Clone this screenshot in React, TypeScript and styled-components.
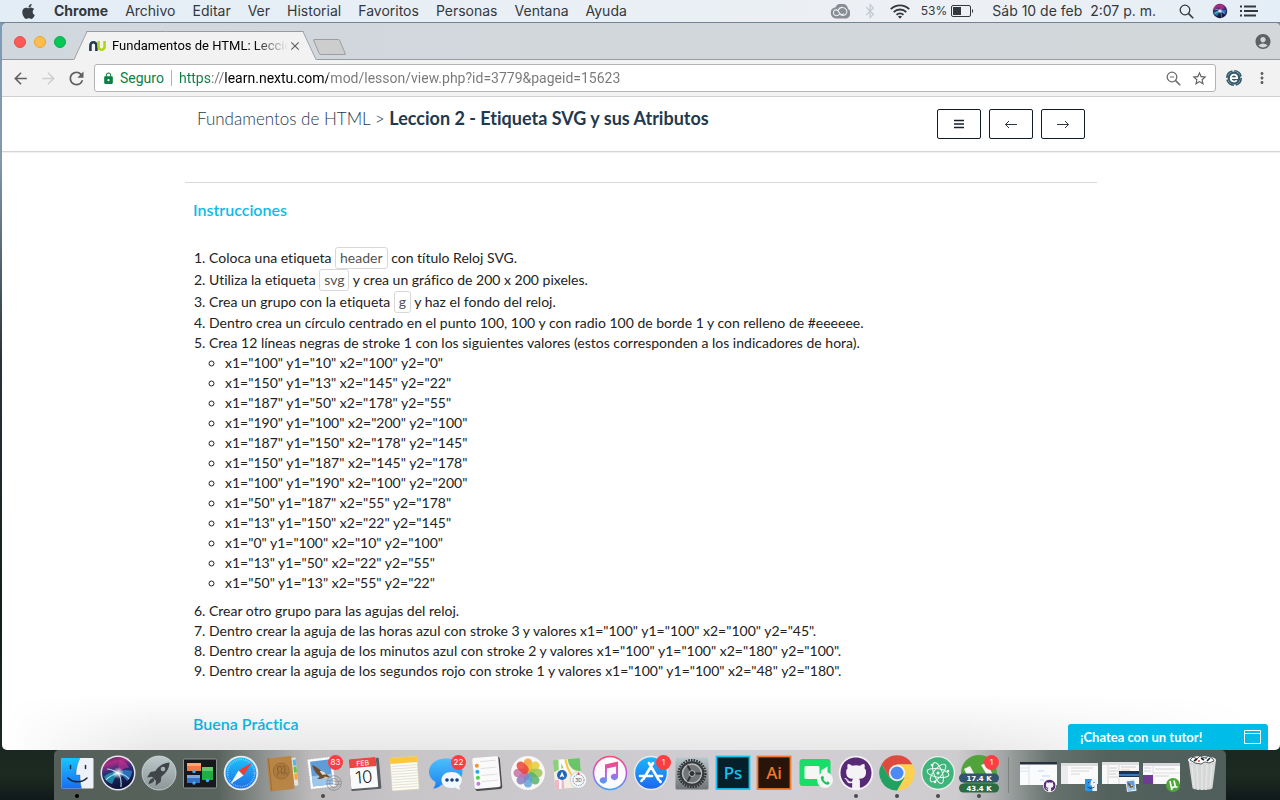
import React from "react";
import styled, { createGlobalStyle } from "styled-components";
import { FaApple, FaBluetoothB, FaGithub } from "react-icons/fa";
import {
  MdAccountCircle,
  MdArrowBack,
  MdArrowForward,
  MdClose,
  MdLock,
  MdMoreVert,
  MdRefresh,
  MdStarBorder,
} from "react-icons/md";

const GlobalStyle = createGlobalStyle`
  * { box-sizing: border-box; }
  body { margin: 0; }
  button, input { font: inherit; color: inherit; }
`;

const systemFont = `Inter, "Liberation Sans", sans-serif`;
const pageFont = `Lato, "Open Sans", sans-serif`;

const Desktop = styled.div`
  display: flex;
  flex-direction: column;
  height: 100vh;
  overflow: hidden;
  font-family: ${systemFont};
  background:
    linear-gradient(180deg, #7d9cb8 0, #8399ad 20%, #26333a 45%, #131d1c 75%, #1b2821 94%, #1d2a21 97%, #10191a 100%);
`;

/* ---------- system menu bar ---------- */

const MenuBar = styled.header`
  display: flex;
  justify-content: space-between;
  height: 23px;
  flex: none;
  padding: 0 22px 0 20px;
  background: linear-gradient(90deg, #e3edf6, #e9eff5 40%, #edf0f4 75%, #e4eef7);
  border-bottom: 1px solid #6f8499;
  color: #33383d;
  font-size: 14px;
  line-height: 22px;
`;

const MenuGroup = styled.nav`
  display: flex;
  align-items: center;
`;

const AppleButton = styled.button`
  display: flex;
  width: 34px;
  padding: 0;
  border: 0;
  background: none;
  color: #3b4046;
`;

const MenuItem = styled.button<{ $strong?: boolean }>`
  padding: 0;
  margin-right: 17px;
  border: 0;
  background: none;
  font-weight: ${(p) => (p.$strong ? 700 : 400)};
  line-height: 22px;
  white-space: nowrap;
`;

const StatusGroup = styled.div`
  display: flex;
  align-items: center;
  white-space: pre;
`;

const StatusItem = styled.span<{ $gap: number; $small?: boolean }>`
  display: flex;
  align-items: center;
  margin-left: ${(p) => p.$gap}px;
  font-size: ${(p) => (p.$small ? 12 : 14)}px;
`;

/* ---------- browser window ---------- */

const BrowserWindow = styled.section`
  position: relative;
  display: flex;
  flex-direction: column;
  flex: 1;
  min-height: 0;
  margin-left: 2px;
  border-radius: 5px;
  overflow: hidden;
  background: #fff;
`;

const TabStrip = styled.div`
  display: flex;
  align-items: flex-end;
  flex: none;
  height: 37px;
  padding: 0 8px 0 12px;
  background: linear-gradient(90deg, #d0d8de, #d2d7db 50%, #d3d7da);
  box-shadow: inset 0 -1px #999c9f;
`;

const Lights = styled.div`
  display: flex;
  align-self: center;
  gap: 8px;
  width: 66px;
`;

const Light = styled.button<{ $color: string; $edge: string }>`
  width: 12px;
  height: 12px;
  padding: 0;
  border: 1px solid ${(p) => p.$edge};
  border-radius: 50%;
  background: ${(p) => p.$color};
`;

const Tab = styled.div`
  position: relative;
  z-index: 0;
  display: flex;
  align-items: center;
  width: 230px;
  height: 29px;
  padding: 0 8px 0 9px;
  color: #000;
  font-family: Roboto, ${systemFont};
  font-size: 13px;

  &::before,
  &::after {
    content: "";
    position: absolute;
    z-index: -1;
    top: 0;
    bottom: 0;
    background: #f2f2f2;
    border: 0 solid #999c9f;
    border-top-width: 1px;
  }
  &::before {
    left: 0;
    right: 40%;
    border-left-width: 1px;
    transform: skewX(-25deg);
  }
  &::after {
    left: 40%;
    right: 0;
    border-right-width: 1px;
    transform: skewX(25deg);
  }
`;

const TabTitle = styled.span`
  flex: 1;
  min-width: 0;
  margin: 0 0 0 6px;
  white-space: nowrap;
  mask-image: linear-gradient(90deg, #000 80%, transparent 100%);
`;

const IconButton = styled.button<{ $color?: string; $width?: number }>`
  display: flex;
  align-items: center;
  justify-content: center;
  flex: none;
  width: ${(p) => p.$width ?? 28}px;
  padding: 0;
  border: 0;
  background: none;
  color: ${(p) => p.$color ?? "#5f6163"};
`;

const NewTab = styled.button`
  width: 27px;
  height: 16px;
  margin: 0 auto 5px 6px;
  padding: 0;
  border: 1px solid #9b9ea0;
  border-radius: 2px;
  background: #cdcdcd;
  transform: skewX(23deg);
`;

const ProfileSlot = styled.div`
  align-self: center;
`;

const Toolbar = styled.form`
  display: flex;
  align-items: center;
  flex: none;
  height: 37px;
  padding: 0 4px;
  background: #f2f2f2;
  border-bottom: 1px solid #cfcfcf;
`;

const AddressBar = styled.div`
  display: flex;
  align-items: center;
  flex: 1;
  height: 28px;
  margin: 0 4px;
  padding: 0 4px 0 7px;
  border: 1px solid #b4b4b4;
  border-radius: 3px;
  background: #fff;
  font-family: Roboto, ${systemFont};
  font-size: 14px;
`;

const Secure = styled.span`
  display: flex;
  align-items: center;
  gap: 5px;
  padding-right: 7px;
  border-right: 1px solid #b0b0b0;
  color: #0b8043;
  line-height: 16px;
`;

const UrlInput = styled.input`
  flex: 1;
  min-width: 0;
  margin-left: 7px;
  padding: 0;
  border: 0;
  outline: 0;
  color: #777;
  -webkit-text-fill-color: transparent;
  background: linear-gradient(90deg, #0b8043 33px, #777 33px, #777 46px, #000 46px, #000 149px, #777 149px);
  -webkit-background-clip: text;
  background-clip: text;
`;

/* ---------- lesson page ---------- */

const Page = styled.main`
  flex: 1;
  min-height: 0;
  overflow: hidden;
  font-family: ${pageFont};
  font-variant-ligatures: no-common-ligatures;
  color: #222;
`;

const LessonHeader = styled.div`
  height: 55px;
  border-bottom: 1px solid #d4d4d4;
  box-shadow: 0 1px #f0f0f0;
`;

const Container = styled.div`
  width: 72%;
  max-width: 912px;
  margin: 0 auto;
`;

const HeaderRow = styled(Container)`
  display: flex;
  justify-content: space-between;
  padding: 9px 12px 0;
`;

const Title = styled.h1`
  margin: 0;
  color: #23394d;
  font-size: 17px;
  font-weight: 300;
  line-height: 24px;

  strong {
    font-size: 18px;
    font-weight: 700;
  }
`;

const PagerButtons = styled.div`
  display: flex;
  gap: 8px;
  padding-top: 3px;
`;

const PagerButton = styled.button`
  display: flex;
  align-items: center;
  justify-content: center;
  width: 44px;
  height: 30px;
  padding: 0;
  border: 1px solid #111c26;
  border-radius: 2px;
  background: #fff;
`;

const Lesson = styled(Container)`
  margin-top: 30px;
  padding: 0 8px;
  border-top: 1px solid #d8d8d8;
`;

const SectionTitle = styled.h2<{ $top: number }>`
  margin: ${(p) => p.$top}px 0 0;
  color: #0cbce8;
  font-size: 16px;
  font-weight: 600;
  line-height: 24px;
`;

const Steps = styled.ol`
  margin: 25px 0 0;
  padding: 0 0 0 16px;
  font-size: 14px;
  line-height: 20px;
`;

const Lines = styled.ul`
  margin: 0 0 8px;
  padding: 0 0 0 16px;
  list-style: circle;
`;

const Code = styled.code`
  display: inline-block;
  padding: 0 4px;
  border: 1px solid #d8d8d8;
  border-radius: 3px;
  color: #555;
  font-family: ${pageFont};
  line-height: 20px;
`;

const DockShade = styled.div`
  position: absolute;
  left: 0;
  right: 0;
  bottom: 0;
  height: 56px;
  pointer-events: none;
  background: linear-gradient(180deg, transparent, rgba(0, 0, 0, 0.09));
  mask-image: linear-gradient(90deg, transparent, #000 12%, #000 75%, transparent 98%);
`;

const ChatButton = styled.button`
  position: absolute;
  right: 12px;
  bottom: 0;
  display: flex;
  align-items: center;
  justify-content: space-between;
  width: 200px;
  height: 26px;
  padding: 0 7px 0 12px;
  border: 0;
  border-radius: 3px 3px 0 0;
  background: #00bce8;
  color: #fff;
  font-family: ${pageFont};
  font-size: 13px;
  font-weight: 700;
`;

/* ---------- dock ---------- */

const DockShelf = styled.footer`
  display: flex;
  justify-content: center;
  flex: none;
  height: 50px;
`;

const Dock = styled.div`
  display: flex;
  padding: 0 4px 0 2px;
  border-radius: 5px 5px 0 0;
  background: linear-gradient(90deg, #535f58 0, #59635d 14%, #8f9391 18%, #bdbabc 22%, #c8c5c9 30%, #d2cfd4 60%, #cfccd0 77%, #a3a6a6 81%, #66726e 85%, #54625e 90%, #4f5e5a 100%);
`;

const DockButton = styled.button`
  position: relative;
  display: flex;
  flex-direction: column;
  align-items: center;
  width: 41px;
  height: 50px;
  padding: 3px 0 0;
  border: 0;
  background: none;
`;

const DockDivider = styled.span`
  width: 1px;
  height: 36px;
  margin: 7px 8px 0 9px;
  background: #7d8482;
`;

const Running = styled.span<{ $dark?: boolean }>`
  width: 4px;
  height: 4px;
  margin-top: 1px;
  border-radius: 50%;
  background: ${(p) => (p.$dark ? "#000" : "#4a484b")};
`;

const Badge = styled.span`
  position: absolute;
  top: 5px;
  right: 0;
  min-width: 15px;
  height: 15px;
  border-radius: 8px;
  background: #fb3e43;
  color: #fff;
  font-family: ${systemFont};
  font-size: 8px;
  line-height: 15px;
  text-align: center;
`;

const Art = ({ children }: { children: React.ReactNode }) => (
  <svg width="40" height="40" viewBox="0 0 40 40" aria-hidden="true">
    {children}
  </svg>
);

const range = (n: number) => Array.from({ length: n }, (_, i) => i);

const Finder = () => (
  <Art>
    <defs>
      <linearGradient id="finder" x1="0" y1="0" x2="0" y2="1">
        <stop offset="0" stopColor="#18c5fd" />
        <stop offset="1" stopColor="#1c6cf4" />
      </linearGradient>
    </defs>
    <rect x="4.500" y="5" width="32" height="30.500" rx="1" fill="#eef2f8" />
    <path d="M4.500 6a1 1 0 0 1 1-1H23c-2.500 5-4 10-4 17h4c0 5 .4 9 1.500 13.500h-19a1 1 0 0 1-1-1z" fill="url(#finder)" />
    <path d="M13.500 12.500v3M28.500 12.500v3" stroke="#1b3040" strokeWidth="1.500" strokeLinecap="round" />
    <path d="M23 5c-2.500 5-4 10-4 17h4c0 5 .4 9 1.500 13.500" fill="none" stroke="#243c50" strokeWidth=".6" opacity=".5" />
    <path d="M11 25c5 5 14 5 19 0" fill="none" stroke="#12202b" strokeWidth="1.400" strokeLinecap="round" />
  </Art>
);

const SiriGlyph = () => (
  <>
    <defs>
      <linearGradient id="siri" x1="0" y1="0" x2=".3" y2="1">
        <stop offset="0" stopColor="#3a2650" />
        <stop offset=".25" stopColor="#b02a86" />
        <stop offset=".5" stopColor="#2c2f78" />
        <stop offset="1" stopColor="#0d1338" />
      </linearGradient>
      <radialGradient id="siriGlow">
        <stop offset="0" stopColor="#fff" />
        <stop offset="1" stopColor="#fff" stopOpacity="0" />
      </radialGradient>
    </defs>
    <circle cx="20" cy="20" r="17.500" fill="#e5e4ec" />
    <circle cx="20" cy="20" r="16" fill="url(#siri)" />
    <path d="M20 20C13 18 9 21 6 24c2 4 5 6 8 7 2-4 3-7 6-11z" fill="#1fc5d3" opacity=".6" />
    <path d="M20 20c5-4 9-3 14-2 0 4-2 8-5 10-3-4-5-6-9-8z" fill="#2f8fe0" opacity=".7" />
    <path d="M20 20c0-6 1-10 2-13 4 1 8 4 9 8-4 0-7 1-11 5z" fill="#d8308f" opacity=".55" />
    <path d="M20 20C15 17 11 16 9 16M20 20c-6 2-10 4-12 7M20 20c4 5 3 11 3 14M20 20c5 1 9 3 11 6" fill="none" stroke="#c7fbff" strokeWidth="1.200" opacity=".8" />
    <circle cx="20" cy="20" r="6" fill="url(#siriGlow)" />
  </>
);

const Launchpad = () => (
  <Art>
    <defs>
      <linearGradient id="launch" x1="0" y1="0" x2="0" y2="1">
        <stop offset="0" stopColor="#bcc8ca" />
        <stop offset="1" stopColor="#8b9698" />
      </linearGradient>
    </defs>
    <circle cx="20" cy="20" r="17" fill="url(#launch)" stroke="#dbe2e2" strokeWidth=".7" />
    <path d="M30.500 9.500c-7 .5-11 4-14 8.500l-5 1-3.500 5.500 5-.8 4 4-.3 5 5-4 .6-5c5-4 8-8 8.200-14.200z" fill="#40454a" />
    <path d="M14 25c-3 1-4 3-4.500 6 3-.5 5-1.500 6-4z" fill="#40454a" />
    <circle cx="24" cy="16" r="2.300" fill="#a7b1b4" />
  </Art>
);

const MissionControl = () => (
  <Art>
    <rect x="3.500" y="6" width="33" height="29" rx="1" fill="#17181b" stroke="#8b9490" strokeWidth="1" />
    <rect x="7" y="10" width="14" height="8" fill="#ef7c3e" />
    <rect x="7" y="10" width="14" height="3" fill="#f8a878" />
    <rect x="7" y="22" width="13" height="8" fill="#3272c9" />
    <rect x="7" y="22" width="13" height="3" fill="#80a7de" />
    <rect x="22" y="14" width="11" height="13" fill="#1fae45" />
    <rect x="22" y="14" width="11" height="4" fill="#64c871" />
    <g fill="#45aaf5">
      <circle cx="14" cy="18.500" r="1.700" />
      <circle cx="14" cy="30" r="1.700" />
      <circle cx="27.500" cy="27.500" r="1.700" />
    </g>
  </Art>
);

const Safari = () => (
  <Art>
    <defs>
      <linearGradient id="safari" x1="0" y1="0" x2="0" y2="1">
        <stop offset="0" stopColor="#1cc3fb" />
        <stop offset="1" stopColor="#1c6fe6" />
      </linearGradient>
    </defs>
    <circle cx="20" cy="20" r="17.300" fill="#e8eaec" />
    <circle cx="20" cy="20" r="15.500" fill="url(#safari)" />
    <circle cx="20" cy="20" r="13.500" fill="none" stroke="#b9e4fb" strokeWidth="1.600" strokeDasharray=".5 1.270" />
    <path d="M31 9.500 22.500 22.500 17.500 17.500z" fill="#f63a35" />
    <path d="M9.500 31 17.500 17.500 22.500 22.500z" fill="#f5f6f7" />
  </Art>
);

const Contacts = () => (
  <Art>
    <g transform="rotate(-6 20 20)">
      <rect x="29" y="6" width="6" height="28" fill="#e9e4da" />
      <rect x="32" y="8" width="3" height="6" fill="#4db6e8" />
      <rect x="32" y="15" width="3" height="6" fill="#62c14e" />
      <rect x="32" y="22" width="3" height="6" fill="#f7a531" />
      <rect x="6" y="4" width="25" height="33" rx="1.500" fill="#b98546" />
      <path d="M8 4v33" stroke="#9a6c36" strokeWidth="1" />
      <circle cx="19.500" cy="18" r="8" fill="#ab7a3f" stroke="#95682f" strokeWidth=".8" />
      <path d="M15 22c0-2 2-2 2-3-2-3-1-6 1-6s3 3 1 6c0 1 3 1 3 3M21 13c3 0 3 4 1.500 6 0 1 2.500 1 2.500 3" fill="none" stroke="#86602f" strokeWidth="1" />
    </g>
  </Art>
);

const StampGlyph = () => (
  <g transform="rotate(-7 18 20)">
    <rect x="6" y="5" width="25" height="30" fill="#fff" />
    <rect x="6" y="5" width="25" height="30" fill="none" stroke="#b8b6ba" strokeWidth="1" strokeDasharray="1 1.500" />
    <rect x="8.500" y="7.500" width="20" height="25" fill="#5f9cd8" />
    <rect x="8.500" y="22" width="20" height="10.500" fill="#9dc6ea" />
    <path d="M10 11c4 2 7 5 9 8 3 1 6 4 8 7-3-1-5-2-7-1-2 1-5 1-7 0 2 0 3-1 3-2-3-3-5-7-6-12z" fill="#6e4c2e" />
    <path d="M17 18c3 0 5 2 6 4l-4 0z" fill="#e6ddcf" />
    <path d="M21 24c2 0 3 1 3 2l-3 0z" fill="#e9c35a" />
  </g>
);

const Mail = () => (
  <Art>
    <StampGlyph />
    <g fill="none" stroke="#85878a" strokeWidth=".9" opacity=".8">
      <circle cx="31" cy="30" r="7.300" />
      <circle cx="31" cy="30" r="4.500" />
      <path d="M24 28c4-2 9 2 14 0M24 31c4-2 9 2 14 0" />
    </g>
  </Art>
);

const Calendar = () => (
  <Art>
    <g transform="rotate(-5 20 20)">
      <rect x="6" y="6" width="30" height="31" rx="1" fill="#596066" />
      <rect x="6" y="5" width="27" height="30" rx="1" fill="#fbfbfb" />
      <path d="M6 14V6a1 1 0 0 1 1-1h25a1 1 0 0 1 1 1v8z" fill="#ec4640" />
      <text x="19.500" y="12.500" textAnchor="middle" fontFamily="Inter, sans-serif" fontSize="7" fill="#fff">FEB</text>
      <text x="19.500" y="30" textAnchor="middle" fontFamily="Inter, sans-serif" fontSize="17" fontWeight="300" fill="#222">10</text>
    </g>
  </Art>
);

const Notes = () => (
  <Art>
    <g transform="rotate(-4 20 20)">
      <rect x="6" y="4" width="27" height="33" fill="#fdfcf4" stroke="#d8cfae" strokeWidth=".6" />
      <rect x="6" y="4" width="27" height="6" fill="#fcc83a" />
      <path d={range(9).map((i) => `M7 ${12.5 + i * 2.7}h25`).join("")} stroke="#dcdbd3" strokeWidth=".8" />
    </g>
  </Art>
);

const Messages = () => (
  <Art>
    <defs>
      <linearGradient id="msg" x1="0" y1="0" x2="0" y2="1">
        <stop offset="0" stopColor="#4cc0fb" />
        <stop offset="1" stopColor="#1a83f1" />
      </linearGradient>
    </defs>
    <path d="M20 5.500C10.500 5.500 3 11 3 18.500c0 4.500 2.500 8 6.500 10.500 0 3-1 5-2.500 6.500 4 0 7-2 8.500-4 12 2 21-4 21-13S29 5.500 20 5.500z" fill="url(#msg)" />
    <path d="M25.500 19c-6 0-10 3.500-10 8s4 8 10 8c1.500 0 3-.2 4-.6 1 1 3 2 5 2-1-1.400-1.300-2.500-1.200-3.700 1.600-1.500 2.500-3.500 2.500-5.700 0-4.500-4.300-8-10.300-8z" fill="#f1f8ff" />
    <g fill="#17407c">
      <circle cx="21" cy="27" r="1.800" />
      <circle cx="26" cy="27" r="1.800" />
      <circle cx="31" cy="27" r="1.800" />
    </g>
  </Art>
);

const Reminders = () => (
  <Art>
    <g transform="rotate(-5 20 20)">
      <rect x="7" y="5" width="27" height="32" rx="2" fill="#4d4c4e" />
      <rect x="6.500" y="4" width="26" height="31" rx="2" fill="#fafafa" />
      <path d="M14 8h16M14 15h16M14 22h16M14 28h16" stroke="#dadada" strokeWidth=".8" />
      <circle cx="10.500" cy="12" r="2" fill="#fb9126" />
      <circle cx="10.500" cy="18" r="2" fill="#26a7f4" />
      <circle cx="10.500" cy="24" r="2" fill="#4cd04b" />
      <circle cx="10.500" cy="30" r="2" fill="#c47be0" />
    </g>
  </Art>
);

const petals = ["#f9a02f", "#e8cd35", "#9fc750", "#57b36b", "#5da5d8", "#8b7fc0", "#c673a9", "#ec4438"];

const Photos = () => (
  <Art>
    <circle cx="20" cy="20" r="17" fill="#f8f7f6" />
    {petals.map((color, i) => (
      <rect key={color} x="15.800" y="5.500" width="8.400" height="14" rx="4.200" fill={color} opacity=".85" transform={`rotate(${i * 45} 20 20)`} />
    ))}
  </Art>
);

const Maps = () => (
  <Art>
    <g transform="rotate(-5 20 20)">
      <rect x="5" y="6" width="27" height="29" fill="#f3efe4" />
      <path d="M20 6h12v13c-7 0-12-5-12-13z" fill="#69c568" />
      <path d="M5 6h6l4 8-10 4z" fill="#8ed078" />
      <path d="M5 26h9v9H5z" fill="#f3b5c4" />
      <path d="M14 6c2 13 9 17 18 18M12 6l-2 29" fill="none" stroke="#fff" strokeWidth="2.500" />
      <path d="M18 6c0 10 4 20 14 23" fill="none" stroke="#f6c945" strokeWidth="2" />
    </g>
    <circle cx="13" cy="22" r="5" fill="#1f66bd" />
    <path d="m13 18.500 2.500 6-2.500-1.200-2.500 1.200z" fill="#fff" />
    <circle cx="29.500" cy="27" r="8.200" fill="#f6f6f7" stroke="#c3c3c6" strokeWidth=".6" />
    <circle cx="29.500" cy="27" r="5.500" fill="none" stroke="#6f8eb0" strokeWidth="1" strokeDasharray="1.500 1" />
    <text x="29.500" y="29" textAnchor="middle" fontFamily="Inter, sans-serif" fontSize="5" fill="#44566c">3D</text>
    <path d="m29.500 19 1.500 2.500h-3z" fill="#e3403a" />
  </Art>
);

const ITunes = () => (
  <Art>
    <defs>
      <linearGradient id="itunes" x1="0" y1="0" x2="0" y2="1">
        <stop offset="0" stopColor="#fb4a72" />
        <stop offset=".5" stopColor="#c15be6" />
        <stop offset="1" stopColor="#45a2f4" />
      </linearGradient>
    </defs>
    <circle cx="20" cy="20" r="16.500" fill="#fcfafc" stroke="url(#itunes)" strokeWidth="1.600" />
    <path d="M15 11.500 28 8.500v15.300a3.600 3.200 0 1 1-1.900-2.700v-7.600l-9.200 2v11.800a3.600 3.200 0 1 1-1.900-2.700z" fill="url(#itunes)" />
  </Art>
);

const AppStore = () => (
  <Art>
    <defs>
      <linearGradient id="store" x1="0" y1="0" x2="0" y2="1">
        <stop offset="0" stopColor="#1bb8fb" />
        <stop offset="1" stopColor="#1d66ee" />
      </linearGradient>
    </defs>
    <circle cx="20" cy="20" r="17.300" fill="#e9e9ef" />
    <circle cx="20" cy="20" r="15.800" fill="url(#store)" />
    <path d="m22 10-9.500 16M18 10l9.500 16.500M9 23h12M26 23h5M10.500 28l.5-1M29 28l.6 1" fill="none" stroke="#fff" strokeWidth="2.600" strokeLinecap="round" />
  </Art>
);

const Preferences = () => (
  <Art>
    <defs>
      <linearGradient id="prefs" x1="0" y1="0" x2="0" y2="1">
        <stop offset="0" stopColor="#b9c8ce" />
        <stop offset="1" stopColor="#6f7477" />
      </linearGradient>
    </defs>
    <rect x="3.500" y="4.500" width="33" height="32" rx="1.500" fill="url(#prefs)" />
    <circle cx="20" cy="20.500" r="13.500" fill="none" stroke="#2e3032" strokeWidth="2.200" strokeDasharray="1.600 1.100" />
    <circle cx="20" cy="20.500" r="12.500" fill="#37393b" />
    <circle cx="20" cy="20.500" r="9.500" fill="#737678" stroke="#b9bcbe" strokeWidth="1.500" />
    <path d="M20 20.500h9M20 20.500l-4.500-8M20 20.500l-4.500 8" stroke="#303234" strokeWidth="2" />
    <circle cx="20" cy="20.500" r="3" fill="#303234" stroke="#bbb" strokeWidth="1" />
  </Art>
);

const AdobeApp = ({ label, ink, paper }: { label: string; ink: string; paper: string }) => (
  <Art>
    <rect x="3.500" y="3.500" width="33" height="32.500" fill={paper} stroke={ink} strokeWidth="1.800" />
    <text x="20" y="26" textAnchor="middle" fontFamily='"Noto Sans", sans-serif' fontSize="17" fontWeight="500" fill={ink}>{label}</text>
  </Art>
);

const FaceTime = () => (
  <Art>
    <rect x="4.500" y="6" width="31" height="27" rx="3" fill="#19dd69" />
    <rect x="9.500" y="13" width="15" height="13" rx="1.500" fill="#f5f7f5" />
    <path d="m26 17.500 6.500-4v12l-6.500-4z" fill="#f5f7f5" />
    <circle cx="30" cy="27" r="8" fill="#f3f4f3" />
    <path d="M26 24c1-1.500 2-1.500 2.800 0 .5 1 .2 1.400-.5 2 .7 1.600 1.600 2.500 3.200 3.200.7-.8 1.200-1 2-.4 1.400 1 1.300 1.800 0 2.800C30 32.500 25 27.500 26 24z" fill="#1bc45b" />
  </Art>
);

const GitHubGlyph = () => (
  <>
    <circle cx="20" cy="20" r="17.300" fill="#f5f2f6" />
    <FaGithub x="4" y="4" size={32} color="#582a75" />
  </>
);

const ChromeArt = () => (
  <Art>
    <path d="M20 11.200h15.300A17.600 17.600 0 0 1 20 37.600l7.600-13.200z" fill="#fdd14f" />
    <path d="M4.700 11.200a17.600 17.600 0 0 0 15.300 26.400l7.600-13.200H12.400z" fill="#22a160" />
    <path d="M4.700 11.200 12.400 24.400 20 11.200h15.300a17.600 17.600 0 0 0-30.600 0z" fill="#dd4b3e" />
    <circle cx="20" cy="20" r="8.200" fill="#f3f3f3" />
    <circle cx="20" cy="20" r="6.500" fill="#4b8bf4" />
  </Art>
);

const Atom = () => (
  <Art>
    <circle cx="20" cy="20" r="17" fill="#e9efeb" />
    <circle cx="20" cy="20" r="15.700" fill="#3fb57c" />
    <g fill="none" stroke="#effaf4" strokeWidth="1">
      {[10, 70, 130].map((a) => (
        <ellipse key={a} cx="20" cy="20" rx="11" ry="4.200" transform={`rotate(${a} 20 20)`} />
      ))}
    </g>
    <g fill="#fff">
      <circle cx="20" cy="20" r="1.500" />
      <circle cx="14" cy="12" r="1.300" />
      <circle cx="30" cy="18" r="1.300" />
      <circle cx="17" cy="29" r="1.300" />
    </g>
  </Art>
);

const Torrent = () => (
  <Art>
    <circle cx="20" cy="20" r="18" fill="#51a43c" />
    <path d="m5 16 6-3 6 11H9zM22 12l6-2 6 12h-6z" fill="#f3f6f1" />
    <rect x="0" y="20.500" width="40" height="9" rx="4.500" fill="#33536f" />
    <rect x="0" y="30.500" width="40" height="9" rx="4.500" fill="#2b6b3f" />
    <g fill="#fff" fontFamily='"DejaVu Sans", sans-serif' fontSize="7" fontWeight="700" textAnchor="middle">
      <text x="20" y="27.500">17.4 K</text>
      <text x="20" y="37.500">43.4 K</text>
    </g>
  </Art>
);

const Shrunk = ({ children }: { children: React.ReactNode }) => (
  <g transform="translate(24 25) scale(.38)">{children}</g>
);

const WindowGitHub = () => (
  <Art>
    <rect x="2" y="9" width="37" height="23" fill="#fafbfd" />
    <rect x="2" y="9" width="37" height="2.500" fill="#26313f" />
    <path d="M11 12v20M2 15h9M2 18h9" stroke="#dde3ea" strokeWidth="1" />
    <path d="M20 18h6M24 23h8M22 27h4" stroke="#dce8fa" strokeWidth="2" />
    <Shrunk><GitHubGlyph /></Shrunk>
  </Art>
);

const WindowFinder = () => (
  <Art>
    <rect x="2" y="10" width="37" height="21" fill="#fbfbfb" />
    <rect x="2" y="10" width="37" height="3" fill="#dedede" />
    <path d="M2 13h7v18H2z" fill="#ececee" />
    <path d="M12 15h22M12 18h18M12 21h9" stroke="#cfd0d2" strokeWidth=".8" />
    <rect x="26" y="26" width="12" height="12" fill="#eef2f8" />
    <path d="M26 26h7c-1 2-1.600 4-1.600 6.500H33c0 2 .2 4 .6 5.500H26z" fill="#1d9bf6" />
    <path d="M28.500 34c2 1.600 5 1.600 7 0M29.500 29v1M35 29v1" fill="none" stroke="#12202b" strokeWidth=".8" />
  </Art>
);

const WindowMail = () => (
  <Art>
    <rect x="2" y="9" width="37" height="22" fill="#f9f9f9" />
    <rect x="2" y="9" width="37" height="3" fill="#dedfe0" />
    <path d="M8 12v19M19 12v19" stroke="#d2d2d4" strokeWidth=".8" />
    <path d="M9 15h8M9 18h9M9 21h7M9 24h9M21 14h15M21 17h9" stroke="#c6c7ca" strokeWidth=".8" />
    <rect x="19" y="18" width="20" height="6" fill="#1c3350" />
    <rect x="19" y="21" width="20" height="2" fill="#3d78b8" />
    <Shrunk><StampGlyph /></Shrunk>
  </Art>
);

const WindowTorrent = () => (
  <Art>
    <rect x="2" y="10" width="37" height="21" fill="#fafafa" />
    <rect x="2" y="10" width="37" height="3" fill="#d9d5df" />
    <path d="M12 13v18M12 20h27" stroke="#d5d5d8" strokeWidth=".8" />
    <path d="M3 15h7M3 18h7M14 16h20M14 23h14" stroke="#c8c8cc" strokeWidth=".8" />
    <rect x="2" y="22" width="10" height="9" fill="#6d3a94" />
    <circle cx="32" cy="32" r="7" fill="#4ea63a" />
    <path d="M29 28l1 5c.4 2 2.600 2 3.400.4M33 27.500l1.500 6.500h2M30 33l1 4" fill="none" stroke="#fff" strokeWidth="1.600" />
  </Art>
);

const Trash = () => (
  <Art>
    <path d="M6.500 7h27.500l-3.500 28c-.3 2.500-19.700 2.500-20 0z" fill="#d6d8d8" />
    <path d="M10 12l2 22M15 12l1 25M20 12v25M25 12l-1 25M30 12l-2 22" stroke="#e3e5e5" strokeWidth="1.600" />
    <ellipse cx="20" cy="7" rx="14" ry="4" fill="#eceeee" />
    <path d="m8 7 3-3 4 2 3-3 5 2 4-2 4 3 1 2-5 2-4-1-4 2-6-1z" fill="#fff" stroke="#43474a" strokeWidth=".9" />
    <path d="m12 8 3-2M19 5l3 2M25 8l3-3" stroke="#1d2225" strokeWidth="1.700" />
    <path d="M16 8h2" stroke="#d6453d" strokeWidth="1.500" />
    <path d="M23 5h2" stroke="#3c8fd0" strokeWidth="1.500" />
  </Art>
);

type DockItem = { name: string; art: React.ReactNode; badge?: string; running?: boolean; dark?: boolean };

const apps: DockItem[] = [
  { name: "Finder", art: <Finder />, running: true, dark: true },
  { name: "Siri", art: <Art><SiriGlyph /></Art> },
  { name: "Launchpad", art: <Launchpad /> },
  { name: "Mission Control", art: <MissionControl /> },
  { name: "Safari", art: <Safari /> },
  { name: "Contactos", art: <Contacts /> },
  { name: "Mail", art: <Mail />, badge: "83", running: true },
  { name: "Calendario", art: <Calendar /> },
  { name: "Notas", art: <Notes /> },
  { name: "Mensajes", art: <Messages />, badge: "22" },
  { name: "Recordatorios", art: <Reminders /> },
  { name: "Fotos", art: <Photos /> },
  { name: "Mapas", art: <Maps /> },
  { name: "iTunes", art: <ITunes /> },
  { name: "App Store", art: <AppStore />, badge: "1" },
  { name: "Preferencias", art: <Preferences /> },
  { name: "Photoshop", art: <AdobeApp label="Ps" ink="#13c5f4" paper="#04202b" /> },
  { name: "Illustrator", art: <AdobeApp label="Ai" ink="#f5792a" paper="#281408" /> },
  { name: "FaceTime", art: <FaceTime /> },
  { name: "GitHub", art: <Art><GitHubGlyph /></Art>, running: true },
  { name: "Chrome", art: <ChromeArt />, running: true },
  { name: "Atom", art: <Atom />, running: true },
  { name: "Torrent", art: <Torrent />, badge: "1", running: true },
];

const minimized: DockItem[] = [
  { name: "Ventana de GitHub", art: <WindowGitHub /> },
  { name: "Ventana de Finder", art: <WindowFinder /> },
  { name: "Ventana de Mail", art: <WindowMail /> },
  { name: "Ventana de Torrent", art: <WindowTorrent /> },
  { name: "Papelera", art: <Trash /> },
];

const DockEntry = ({ item }: { item: DockItem }) => (
  <DockButton type="button" aria-label={item.name}>
    {item.art}
    {item.badge && <Badge>{item.badge}</Badge>}
    {item.running && <Running $dark={item.dark} />}
  </DockButton>
);

/* ---------- status icons ---------- */

const CloudIcon = () => (
  <svg width="20" height="15" viewBox="0 0 20 15" aria-hidden="true">
    <path d="M6 14.500A5.700 5.700 0 0 1 5.500 3.200 6.800 6.800 0 0 1 18.300 5 5.300 5.300 0 0 1 15 14.500z" fill="#8a8e94" />
    <path d="M13.800 9.500c-1 1.500-3 1.300-4-.2L7.800 6.700c-1-1.200-3.300-1.200-4.200.7-.8 2 .6 4.300 2.900 4.300 1.300 0 2.300-.6 3.100-1.700M8 6.500c1-2 3-3.500 5-3 3.500.5 4.800 4 3.200 6.300-1.500 2.200-4.300 2.400-6 .3" fill="none" stroke="#e9eff4" strokeWidth="1.100" />
  </svg>
);

const WifiIcon = () => (
  <svg width="20" height="15" viewBox="0 0 20 15" aria-hidden="true">
    <g fill="none" stroke="#34383c" strokeWidth="1.900">
      <path d="M.8 5.200a13 13 0 0 1 18.400 0" />
      <path d="M3.700 8.100a9 9 0 0 1 12.600 0" />
      <path d="M6.500 10.900a5 5 0 0 1 7 0" />
    </g>
    <path d="m10 14.800-2-2.200a2.900 2.900 0 0 1 4 0z" fill="#34383c" />
  </svg>
);

const BatteryIcon = () => (
  <svg width="24" height="12" viewBox="0 0 24 12" aria-hidden="true">
    <rect x=".5" y=".5" width="19" height="11" rx="1.500" fill="none" stroke="#34383c" />
    <rect x="2" y="2" width="8" height="8" fill="#34383c" />
    <path d="M21 4v4c1.500-.6 1.500-3.400 0-4z" fill="#34383c" />
  </svg>
);

const SearchIcon = ({ minus, color = "#34383c" }: { minus?: boolean; color?: string }) => (
  <svg width="15" height="15" viewBox="0 0 15 15" aria-hidden="true" fill="none" stroke={color}>
    <circle cx="6" cy="6" r="4.800" strokeWidth="1.300" />
    <path d="m9.600 9.600 4.600 4.600" strokeWidth="1.600" />
    {minus && <path d="M3.800 6h4.400" strokeWidth="1.200" />}
  </svg>
);

const ListIcon = () => (
  <svg width="18" height="12" viewBox="0 0 18 12" aria-hidden="true" stroke="#34383c" strokeWidth="2">
    <path d="M0 1.500h2M4 1.500h12M0 6h2M4 6h14M0 10.500h2M4 10.500h12" />
  </svg>
);

const SiteIcon = () => (
  <svg width="17" height="10" viewBox="0 0 17 10" aria-hidden="true" fill="none" strokeWidth="2.600">
    <path d="M1.400 10V4.500a3 3.200 0 0 1 6 0V10" stroke="#24384e" />
    <path d="M9.600 0v5.500a3 3.200 0 0 0 6 0V0" stroke="#b0d519" />
  </svg>
);

const ExtensionIcon = () => (
  <svg width="16" height="16" viewBox="0 0 16 16" aria-hidden="true">
    <circle cx="8" cy="8" r="7.200" fill="none" stroke="#33586b" strokeWidth="1.600" strokeDasharray="9.500 1.800" />
    <circle cx="8" cy="8" r="6.400" fill="#33586b" />
    <path d="M5 8.200h6.200C11.200 3.500 4.700 3.500 4.700 8c0 4.300 4.600 4.200 6.100 2.300" fill="none" stroke="#fff" strokeWidth="1.800" />
  </svg>
);

const MenuGlyph = () => (
  <svg width="10" height="10" viewBox="0 0 10 10" aria-hidden="true">
    <path d="M0 1.500h10M0 5h10M0 8.500h10" stroke="#15202b" strokeWidth="1.300" />
  </svg>
);

const ArrowGlyph = ({ right }: { right?: boolean }) => (
  <svg width="12" height="8" viewBox="0 0 12 8" aria-hidden="true" fill="none" stroke="#2b3640">
    <path d={right ? "M0 4.500h11.500M8 1l3.500 3.500L8 8" : "M12 4.500H.5M4 1 .5 4.500 4 8"} />
  </svg>
);

const ChatWindowIcon = () => (
  <svg width="17" height="14" viewBox="0 0 17 14" aria-hidden="true" fill="none" stroke="#fff">
    <path d="M.5.5h16v13H.5zM.5 3.500h16" />
  </svg>
);

const menus = ["Archivo", "Editar", "Ver", "Historial", "Favoritos", "Personas", "Ventana", "Ayuda"];

const clockLines = [
  [100, 10, 100, 0],
  [150, 13, 145, 22],
  [187, 50, 178, 55],
  [190, 100, 200, 100],
  [187, 150, 178, 145],
  [150, 187, 145, 178],
  [100, 190, 100, 200],
  [50, 187, 55, 178],
  [13, 150, 22, 145],
  [0, 100, 10, 100],
  [13, 50, 22, 55],
  [50, 13, 55, 22],
];

const coords = ([x1, y1, x2, y2]: number[]) => `x1="${x1}" y1="${y1}" x2="${x2}" y2="${y2}"`;

export default function App() {
  return (
    <Desktop>
      <GlobalStyle />
      <MenuBar>
        <MenuGroup>
          <AppleButton type="button" aria-label="Apple"><FaApple size={17} /></AppleButton>
          <MenuItem type="button" $strong>Chrome</MenuItem>
          {menus.map((m) => <MenuItem type="button" key={m}>{m}</MenuItem>)}
        </MenuGroup>
        <StatusGroup>
          <StatusItem $gap={0}><CloudIcon /></StatusItem>
          <StatusItem $gap={12}><FaBluetoothB size={16} color="#c3cad1" /></StatusItem>
          <StatusItem $gap={12}><WifiIcon /></StatusItem>
          <StatusItem $gap={11} $small>53%</StatusItem>
          <StatusItem $gap={4}><BatteryIcon /></StatusItem>
          <StatusItem $gap={17}>Sáb 10 de feb  2:07 p. m.</StatusItem>
          <StatusItem $gap={23}><SearchIcon /></StatusItem>
          <StatusItem $gap={17}>
            <svg width="18" height="18" viewBox="0 0 40 40" aria-hidden="true"><SiriGlyph /></svg>
          </StatusItem>
          <StatusItem $gap={11}><ListIcon /></StatusItem>
        </StatusGroup>
      </MenuBar>

      <BrowserWindow>
        <TabStrip>
          <Lights>
            <Light type="button" aria-label="Cerrar" $color="#fc5b57" $edge="#e8504c" />
            <Light type="button" aria-label="Minimizar" $color="#fdbc4b" $edge="#e8a63a" />
            <Light type="button" aria-label="Ampliar" $color="#06c655" $edge="#06b04b" />
          </Lights>
          <Tab>
            <SiteIcon />
            <TabTitle>Fundamentos de HTML: Leccio</TabTitle>
            <IconButton type="button" aria-label="Cerrar pestaña" $width={14}><MdClose size={14} /></IconButton>
          </Tab>
          <NewTab type="button" aria-label="Nueva pestaña" />
          <ProfileSlot>
            <IconButton type="button" aria-label="Perfil" $width={18}><MdAccountCircle size={19} /></IconButton>
          </ProfileSlot>
        </TabStrip>
        <Toolbar onSubmit={(e) => e.preventDefault()}>
          <IconButton type="button" aria-label="Atrás"><MdArrowBack size={19} /></IconButton>
          <IconButton type="button" aria-label="Adelante" $color="#cfcfcf"><MdArrowForward size={19} /></IconButton>
          <IconButton type="button" aria-label="Recargar"><MdRefresh size={21} /></IconButton>
          <AddressBar>
            <Secure><MdLock size={13} />Seguro</Secure>
            <UrlInput
              type="text"
              aria-label="Dirección"
              defaultValue="https://learn.nextu.com/mod/lesson/view.php?id=3779&pageid=15623"
            />
            <IconButton type="button" aria-label="Zoom"><SearchIcon minus color="#6b6d6f" /></IconButton>
            <IconButton type="button" aria-label="Marcador" $width={24}><MdStarBorder size={17} /></IconButton>
          </AddressBar>
          <IconButton type="button" aria-label="Extensión"><ExtensionIcon /></IconButton>
          <IconButton type="button" aria-label="Menú"><MdMoreVert size={18} /></IconButton>
        </Toolbar>

        <Page>
          <LessonHeader>
            <HeaderRow>
              <Title>Fundamentos de HTML &gt; <strong>Leccion 2 - Etiqueta SVG y sus Atributos</strong></Title>
              <PagerButtons>
                <PagerButton type="button" aria-label="Índice"><MenuGlyph /></PagerButton>
                <PagerButton type="button" aria-label="Anterior"><ArrowGlyph /></PagerButton>
                <PagerButton type="button" aria-label="Siguiente"><ArrowGlyph right /></PagerButton>
              </PagerButtons>
            </HeaderRow>
          </LessonHeader>
          <Lesson>
            <SectionTitle $top={15}>Instrucciones</SectionTitle>
            <Steps>
              <li>Coloca una etiqueta <Code>header</Code> con título Reloj SVG.</li>
              <li>Utiliza la etiqueta <Code>svg</Code> y crea un gráfico de 200 x 200 pixeles.</li>
              <li>Crea un grupo con la etiqueta <Code>g</Code> y haz el fondo del reloj.</li>
              <li>Dentro crea un círculo centrado en el punto 100, 100 y con radio 100 de borde 1 y con relleno de #eeeeee.</li>
              <li>
                Crea 12 líneas negras de stroke 1 con los siguientes valores (estos corresponden a los indicadores de hora).
                <Lines>
                  {clockLines.map((l) => <li key={l.join()}>{coords(l)}</li>)}
                </Lines>
              </li>
              <li>Crear otro grupo para las agujas del reloj.</li>
              <li>Dentro crear la aguja de las horas azul con stroke 3 y valores {coords([100, 100, 100, 45])}.</li>
              <li>Dentro crear la aguja de los minutos azul con stroke 2 y valores {coords([100, 100, 180, 100])}.</li>
              <li>Dentro crear la aguja de los segundos rojo con stroke 1 y valores {coords([100, 100, 48, 180])}.</li>
            </Steps>
            <SectionTitle $top={31}>Buena Práctica</SectionTitle>
          </Lesson>
        </Page>
        <DockShade />
        <ChatButton type="button">¡Chatea con un tutor!<ChatWindowIcon /></ChatButton>
      </BrowserWindow>

      <DockShelf>
        <Dock>
          {apps.map((item) => <DockEntry key={item.name} item={item} />)}
          <DockDivider />
          {minimized.map((item) => <DockEntry key={item.name} item={item} />)}
        </Dock>
      </DockShelf>
    </Desktop>
  );
}
